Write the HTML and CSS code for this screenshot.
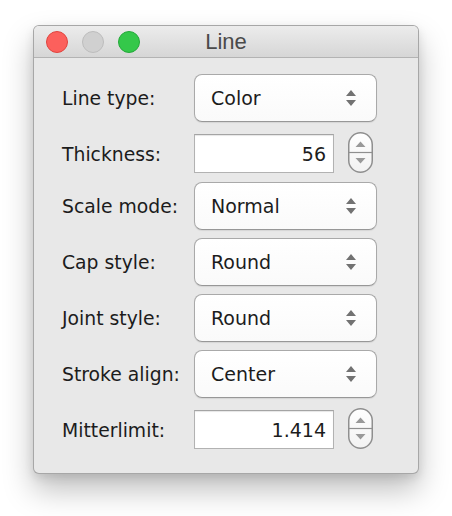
FILE: index.html
```html
<!DOCTYPE html>
<html>
<head>
<meta charset="utf-8">
<link rel="stylesheet" href="styles.css">
</head>
<body>
<div class="window">
  <div class="titlebar">
    <div class="lights">
      <span class="light red"></span>
      <span class="light gray"></span>
      <span class="light green"></span>
    </div>
    <div class="title">Line</div>
    <div></div>
  </div>
  <div class="content">
    <div class="row">
      <span class="label">Line type:</span>
      <div class="select"><span>Color</span><span class="arrows"><svg width="10" height="20" viewBox="0 0 10 20"><path d="M5 2 L10 8 L0 8 Z M5 18 L10 12 L0 12 Z" fill="#727272"/></svg></span></div>
    </div>
    <div class="row row-field">
      <span class="label">Thickness:</span>
      <div class="field">56</div>
      <div class="stepper"><svg width="25" height="41" viewBox="0 0 25 41"><defs><linearGradient id="g1" x1="0" y1="0" x2="0" y2="1"><stop offset="0" stop-color="#ffffff"/><stop offset="1" stop-color="#f2f2f2"/></linearGradient></defs><rect x="0.75" y="0.75" width="23.5" height="39.5" rx="11.75" fill="url(#g1)" stroke="#8f8f8f" stroke-width="1.5"/><line x1="1" y1="20.5" x2="24" y2="20.5" stroke="#8f8f8f" stroke-width="1.2"/><path d="M12.5 9.5 L17.5 15 L7.5 15 Z M12.5 31.5 L17.5 26 L7.5 26 Z" fill="#999999"/></svg></div>
    </div>
    <div class="row">
      <span class="label">Scale mode:</span>
      <div class="select"><span>Normal</span><span class="arrows"><svg width="10" height="20" viewBox="0 0 10 20"><path d="M5 2 L10 8 L0 8 Z M5 18 L10 12 L0 12 Z" fill="#727272"/></svg></span></div>
    </div>
    <div class="row">
      <span class="label">Cap style:</span>
      <div class="select"><span>Round</span><span class="arrows"><svg width="10" height="20" viewBox="0 0 10 20"><path d="M5 2 L10 8 L0 8 Z M5 18 L10 12 L0 12 Z" fill="#727272"/></svg></span></div>
    </div>
    <div class="row">
      <span class="label">Joint style:</span>
      <div class="select"><span>Round</span><span class="arrows"><svg width="10" height="20" viewBox="0 0 10 20"><path d="M5 2 L10 8 L0 8 Z M5 18 L10 12 L0 12 Z" fill="#727272"/></svg></span></div>
    </div>
    <div class="row">
      <span class="label">Stroke align:</span>
      <div class="select"><span>Center</span><span class="arrows"><svg width="10" height="20" viewBox="0 0 10 20"><path d="M5 2 L10 8 L0 8 Z M5 18 L10 12 L0 12 Z" fill="#727272"/></svg></span></div>
    </div>
    <div class="row row-field">
      <span class="label">Mitterlimit:</span>
      <div class="field">1.414</div>
      <div class="stepper"><svg width="25" height="41" viewBox="0 0 25 41"><defs><linearGradient id="g2" x1="0" y1="0" x2="0" y2="1"><stop offset="0" stop-color="#ffffff"/><stop offset="1" stop-color="#f2f2f2"/></linearGradient></defs><rect x="0.75" y="0.75" width="23.5" height="39.5" rx="11.75" fill="url(#g2)" stroke="#8f8f8f" stroke-width="1.5"/><line x1="1" y1="20.5" x2="24" y2="20.5" stroke="#8f8f8f" stroke-width="1.2"/><path d="M12.5 9.5 L17.5 15 L7.5 15 Z M12.5 31.5 L17.5 26 L7.5 26 Z" fill="#999999"/></svg></div>
    </div>
  </div>
</div>
</body>
</html>
```
FILE: styles.css
```css
* { box-sizing: border-box; }
html, body { margin: 0; padding: 0; background: #ffffff; }
body {
  padding: 25px 0 0 33px;
  min-height: 516px;
  font-family: "DejaVu Sans", sans-serif;
}

.window {
  width: 386px;
  height: 449px;
  background: #e8e8e8;
  border: 1px solid rgba(0,0,0,0.28);
  border-radius: 6px;
  box-shadow: 0 16px 30px rgba(0,0,0,0.25), 0 4px 10px rgba(0,0,0,0.1);
}

.titlebar {
  height: 32px;
  display: grid;
  grid-template-columns: 1fr auto 1fr;
  align-items: center;
  background: linear-gradient(#ececec, #d6d6d6);
  border-bottom: 1px solid #b3b3b3;
  border-radius: 5px 5px 0 0;
}
.lights { display: flex; gap: 14px; padding-left: 12px; }
.light {
  width: 22px; height: 22px; border-radius: 50%;
  display: block;
}
.red { background: #fc605c; border: 1px solid #e0443e; }
.gray { background: #d0d0d0; border: 1px solid #bdbdbd; }
.green { background: #34c84a; border: 1px solid #24a93a; }
.title {
  font-family: "Liberation Sans", sans-serif;
  font-size: 22px;
  color: #4a4a4a;
  padding-top: 1px;
}

.content {
  padding: 16px 0 0 28px;
  display: flex;
  flex-direction: column;
  gap: 8px;
}
.row {
  display: flex;
  align-items: center;
  height: 48px;
}
.row-field { height: 44px; }
.label {
  width: 132px;
  font-size: 18.8px;
  color: #1c1c1c;
}
.row-field .label { padding-top: 4px; }
.select {
  width: 183px;
  height: 48px;
  display: flex;
  align-items: center;
  justify-content: space-between;
  padding: 0 20px 0 16px;
  background: linear-gradient(#ffffff, #fafafa);
  border: 1px solid #a9a9a9;
  border-bottom-color: #979797;
  border-radius: 8px;
  box-shadow: 0 1px 1px rgba(0,0,0,0.08);
  font-size: 19px;
  color: #1c1c1c;
}
.arrows { display: flex; }
.field {
  width: 140px;
  height: 39px;
  margin-top: 4px;
  align-self: flex-start;
  background: #ffffff;
  border: 1px solid #b2b2b2;
  border-top-color: #a4a4a4;
  box-shadow: inset 0 1px 1px rgba(0,0,0,0.1);
  display: flex;
  align-items: center;
  justify-content: flex-end;
  padding-right: 7px;
  font-size: 19px;
  color: #1c1c1c;
}
.stepper {
  margin-left: 14px;
  align-self: flex-start;
  margin-top: 2px;
  display: flex;
}
```
